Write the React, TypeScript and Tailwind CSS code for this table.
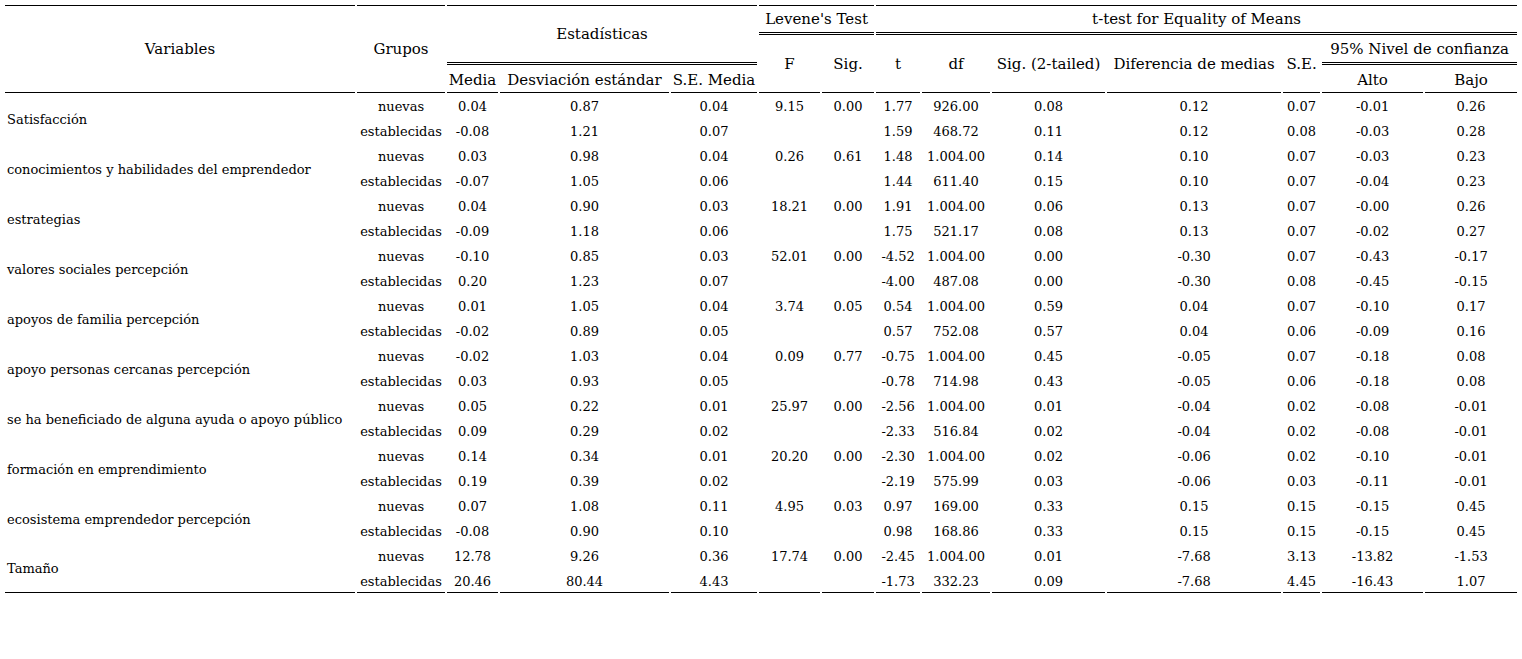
const rows: [string, string[], string[]][] = [
  ["Satisfacción", ["0.04", "0.87", "0.04", "9.15", "0.00", "1.77", "926.00", "0.08", "0.12", "0.07", "-0.01", "0.26"], ["-0.08", "1.21", "0.07", "", "", "1.59", "468.72", "0.11", "0.12", "0.08", "-0.03", "0.28"]],
  ["conocimientos y habilidades del emprendedor", ["0.03", "0.98", "0.04", "0.26", "0.61", "1.48", "1.004.00", "0.14", "0.10", "0.07", "-0.03", "0.23"], ["-0.07", "1.05", "0.06", "", "", "1.44", "611.40", "0.15", "0.10", "0.07", "-0.04", "0.23"]],
  ["estrategias", ["0.04", "0.90", "0.03", "18.21", "0.00", "1.91", "1.004.00", "0.06", "0.13", "0.07", "-0.00", "0.26"], ["-0.09", "1.18", "0.06", "", "", "1.75", "521.17", "0.08", "0.13", "0.07", "-0.02", "0.27"]],
  ["valores sociales percepción", ["-0.10", "0.85", "0.03", "52.01", "0.00", "-4.52", "1.004.00", "0.00", "-0.30", "0.07", "-0.43", "-0.17"], ["0.20", "1.23", "0.07", "", "", "-4.00", "487.08", "0.00", "-0.30", "0.08", "-0.45", "-0.15"]],
  ["apoyos de familia percepción", ["0.01", "1.05", "0.04", "3.74", "0.05", "0.54", "1.004.00", "0.59", "0.04", "0.07", "-0.10", "0.17"], ["-0.02", "0.89", "0.05", "", "", "0.57", "752.08", "0.57", "0.04", "0.06", "-0.09", "0.16"]],
  ["apoyo personas cercanas percepción", ["-0.02", "1.03", "0.04", "0.09", "0.77", "-0.75", "1.004.00", "0.45", "-0.05", "0.07", "-0.18", "0.08"], ["0.03", "0.93", "0.05", "", "", "-0.78", "714.98", "0.43", "-0.05", "0.06", "-0.18", "0.08"]],
  ["se ha beneficiado de alguna ayuda o apoyo público", ["0.05", "0.22", "0.01", "25.97", "0.00", "-2.56", "1.004.00", "0.01", "-0.04", "0.02", "-0.08", "-0.01"], ["0.09", "0.29", "0.02", "", "", "-2.33", "516.84", "0.02", "-0.04", "0.02", "-0.08", "-0.01"]],
  ["formación en emprendimiento", ["0.14", "0.34", "0.01", "20.20", "0.00", "-2.30", "1.004.00", "0.02", "-0.06", "0.02", "-0.10", "-0.01"], ["0.19", "0.39", "0.02", "", "", "-2.19", "575.99", "0.03", "-0.06", "0.03", "-0.11", "-0.01"]],
  ["ecosistema emprendedor percepción", ["0.07", "1.08", "0.11", "4.95", "0.03", "0.97", "169.00", "0.33", "0.15", "0.15", "-0.15", "0.45"], ["-0.08", "0.90", "0.10", "", "", "0.98", "168.86", "0.33", "0.15", "0.15", "-0.15", "0.45"]],
  ["Tamaño", ["12.78", "9.26", "0.36", "17.74", "0.00", "-2.45", "1.004.00", "0.01", "-7.68", "3.13", "-13.82", "-1.53"], ["20.46", "80.44", "4.43", "", "", "-1.73", "332.23", "0.09", "-7.68", "4.45", "-16.43", "1.07"]],
]

// column widths read off the ruled lines
const widths = [350, 88, 51, 169, 86, 61, 52, 44, 68, 113, 174, 37, 101, 92]

export default function App() {
  const th = "p-0 text-center font-normal text-[15px] text-black whitespace-nowrap"
  const single = "border-b border-black"
  const double = "border-b-[3px] border-double border-black"
  return (
    <div className="w-[1522px] h-[659px] bg-white pt-[3px] pl-[3px] font-['DejaVu_Serif',serif]">
      <table className="table-fixed border-separate border-spacing-[2px] w-[1516px]">
        <colgroup>
          {widths.map((w, i) => (
            <col key={i} style={{ width: w }} />
          ))}
        </colgroup>
        <thead>
          <tr className="h-[30px]">
            <th rowSpan={3} className={`${th} pt-px border-t border-black ${single}`}>Variables</th>
            <th rowSpan={3} className={`${th} pt-px border-t border-black ${single}`}>Grupos</th>
            <th colSpan={3} rowSpan={2} className={`${th} pt-px border-t border-black ${double}`}>Estadísticas</th>
            <th colSpan={2} className={`${th} border-t border-black ${double}`}>Levene's Test</th>
            <th colSpan={7} className={`${th} border-t border-black ${double}`}>t-test for Equality of Means</th>
          </tr>
          <tr className="h-[28px]">
            <th rowSpan={2} className={`${th} ${single}`}>F</th>
            <th rowSpan={2} className={`${th} ${single}`}>Sig.</th>
            <th rowSpan={2} className={`${th} ${single}`}>t</th>
            <th rowSpan={2} className={`${th} ${single}`}>df</th>
            <th rowSpan={2} className={`${th} ${single}`}>Sig. (2-tailed)</th>
            <th rowSpan={2} className={`${th} ${single}`}>Diferencia de medias</th>
            <th rowSpan={2} className={`${th} ${single}`}>S.E.</th>
            <th colSpan={2} className={`${th} ${double}`}>95% Nivel de confianza</th>
          </tr>
          <tr className="h-[26px]">
            <th className={`${th} pt-px ${single}`}>Media</th>
            <th className={`${th} pt-px ${single}`}>Desviación estándar</th>
            <th className={`${th} pt-px ${single}`}>S.E. Media</th>
            <th className={`${th} pt-px ${single}`}>Alto</th>
            <th className={`${th} pt-px ${single}`}>Bajo</th>
          </tr>
        </thead>
        <tbody className="text-[13px] text-black">
          {rows.map(([name, a, b], ri) => {
            const last = ri === rows.length - 1
            const bb = last ? single : ""
            return [
              <tr key={`${ri}a`} className="h-[23px]">
                <td rowSpan={2} className={`p-0 pt-px pl-[2px] text-left whitespace-nowrap ${bb}`}>{name}</td>
                <td className="p-0 pt-px text-center">nuevas</td>
                {a.map((v, i) => (
                  <td key={i} className="p-0 pt-px text-center whitespace-nowrap">{v}</td>
                ))}
              </tr>,
              <tr key={`${ri}b`} className="h-[23px]">
                <td className={`p-0 pt-px text-center ${bb}`}>establecidas</td>
                {b.map((v, i) => (
                  <td key={i} className={`p-0 pt-px text-center whitespace-nowrap ${bb}`}>{v}</td>
                ))}
              </tr>,
            ]
          })}
        </tbody>
      </table>
    </div>
  )
}
